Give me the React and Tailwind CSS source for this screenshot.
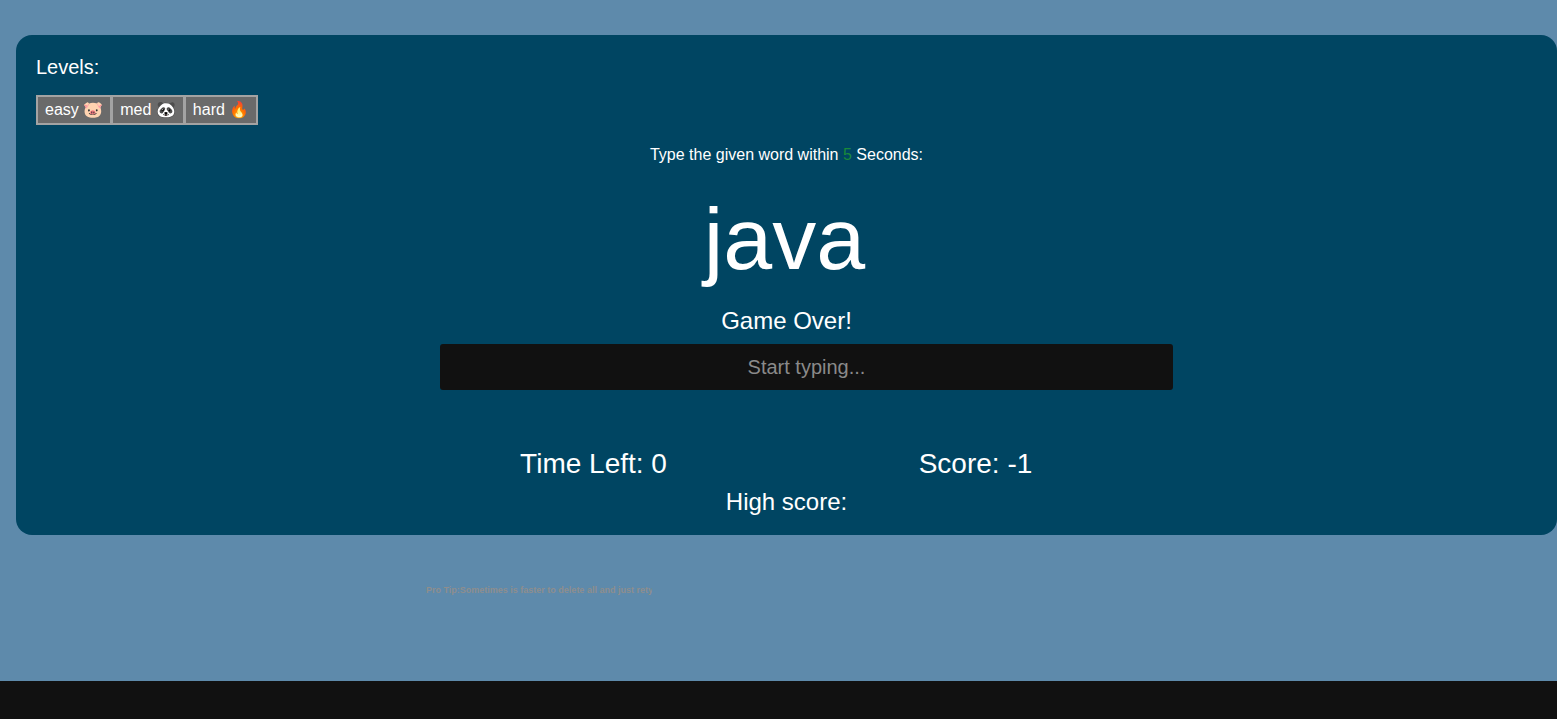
export default function App() {
  const f = { fontFamily: '"Liberation Sans", Arial, sans-serif' };
  return (
    <div style={f} className="w-[1557px] h-[719px] bg-[#5e8aab] flex flex-col overflow-hidden">
      <div className="h-[35px]" />
      <div className="ml-4 w-[1541px] h-[500px] bg-[#004562] rounded-[16px] text-white px-5 pt-[20px]">
        <div className="text-[20px] leading-[24px]">Levels:</div>
        <div className="flex mt-[16px] w-max border-2 border-[#a3a3a3] bg-[#a3a3a3] gap-[3px]">
          <div className="bg-[#6a6a6a] px-[7px] h-[26px] leading-[26px] text-[16px]">easy 🐷</div>
          <div className="bg-[#6a6a6a] px-[7px] h-[26px] leading-[26px] text-[16px]">med 🐼</div>
          <div className="bg-[#6a6a6a] px-[7px] h-[26px] leading-[26px] text-[16px]">hard 🔥</div>
        </div>
        <div className="text-center text-[16px] mt-[20px] leading-[20px]">
          Type the given word within <span className="text-[#1a8a3a]">5</span> Seconds:
        </div>
        <div className="text-center text-[88px] leading-[100px] mt-[24px] ml-[-4px]">java</div>
        <div className="text-center text-[24px] leading-[28px] mt-[18px]">Game Over!</div>
        <div className="flex justify-center mt-[9px] pl-[40px]">
          <div className="w-[733px] h-[46px] bg-[#111111] rounded-[3px] flex items-center justify-center text-[20px] text-[#8a8a8a]">Start typing...</div>
        </div>
        <div className="flex justify-center mt-[58px] text-[28px] leading-[32px]">
          <div className="w-[380px] text-center ml-[-4px]">Time Left: 0</div>
          <div className="w-[380px] text-center ml-[2px]">Score: -1</div>
        </div>
        <div className="text-center text-[24px] leading-[28px] mt-[8px]">High score:</div>
      </div>
      <div className="h-[49px]" />
      <div className="ml-[426px] w-[226px] overflow-hidden whitespace-nowrap text-[9px] font-bold text-[#8e8e8e]">
        Pro Tip:Sometimes is faster to delete all and just retype it
      </div>
      <div className="flex-1" />
      <div className="h-[38px] bg-[#111111]" />
    </div>
  );
}
